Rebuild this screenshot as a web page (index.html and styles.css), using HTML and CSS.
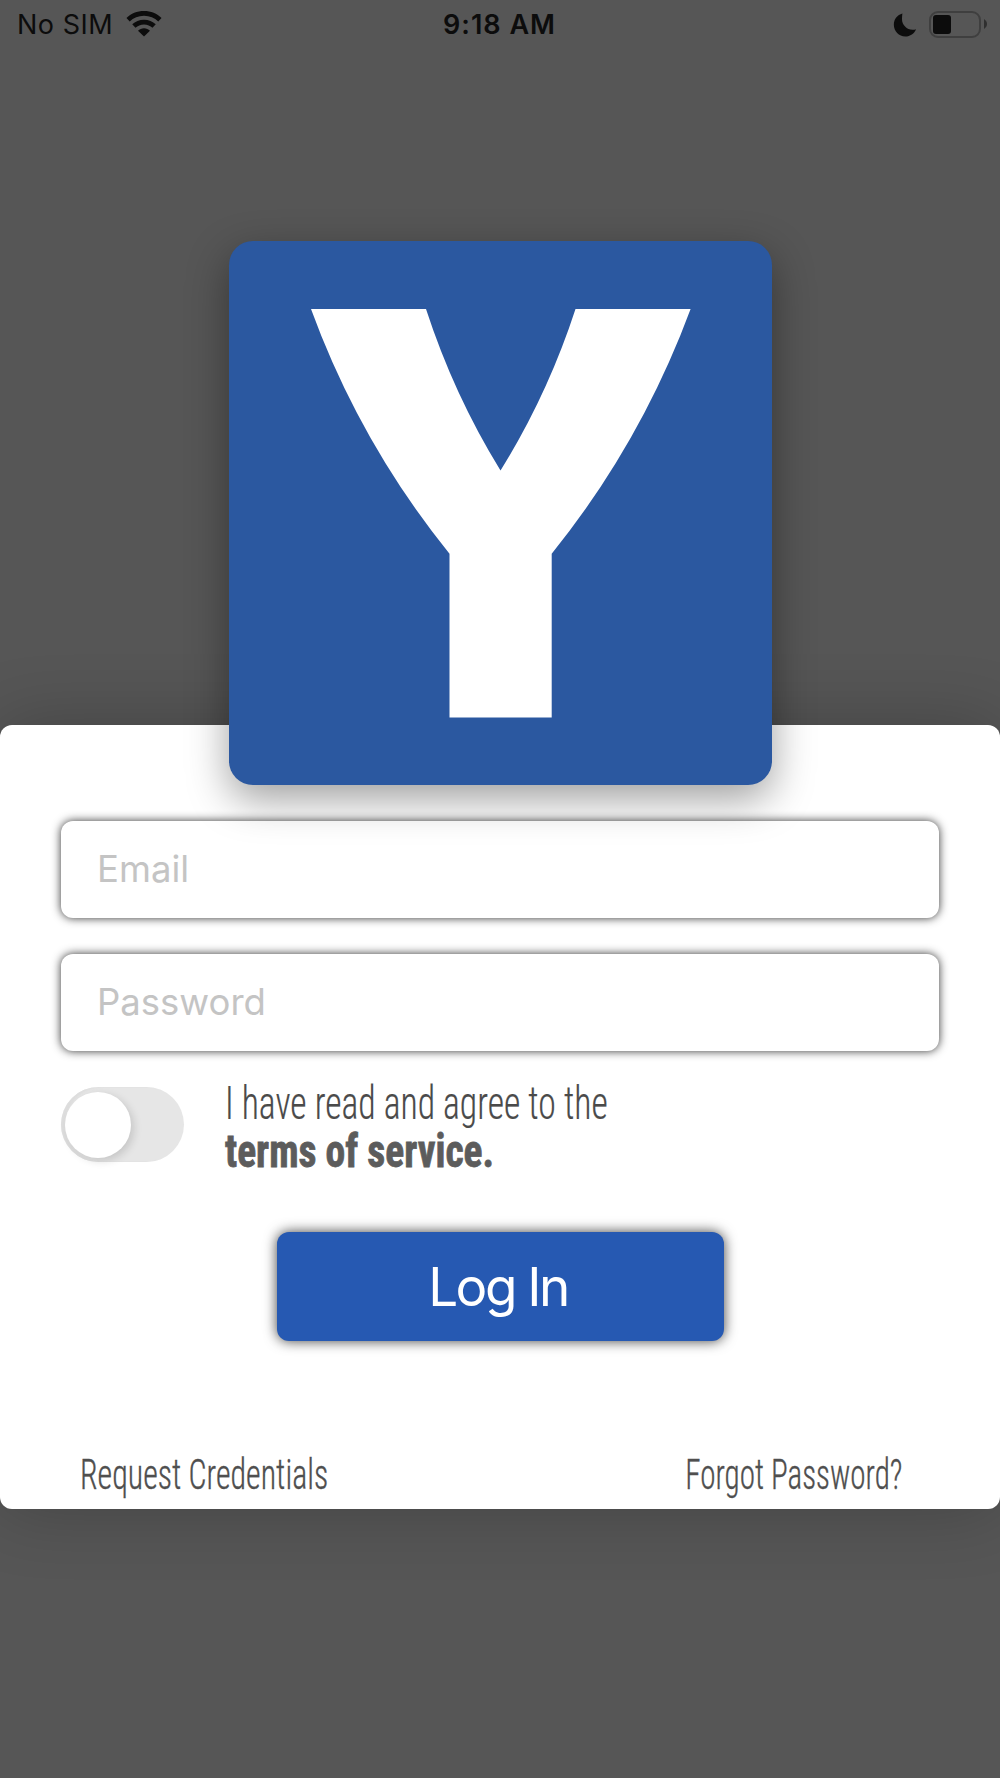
FILE: index.html
```html
<!DOCTYPE html>
<html lang="en">
<head>
<meta charset="utf-8">
<title>Log In</title>
<link rel="stylesheet" href="styles.css">
</head>
<body>
<div class="screen">
  <header class="status">
    <div class="status-left">
      <span class="carrier">No SIM</span>
      <svg class="wifi" viewBox="0 0 38 28" aria-hidden="true">
        <path d="M19 1C11.800 1 5.400 3.700 .8 8.200l3.400 3.700C8 8.200 13.200 6 19 6s11 2.200 14.800 5.900l3.400-3.700C32.600 3.700 26.200 1 19 1z"/>
        <path d="M19 10c-4.800 0-9.100 1.800-12.200 4.800l3.400 3.700C12.400 16.300 15.500 15 19 15s6.600 1.300 8.800 3.500l3.400-3.700C28.100 11.800 23.800 10 19 10z"/>
        <path d="M19 19c-2.400 0-4.600.9-6.200 2.500L19 27.500l6.200-6C23.600 19.900 21.400 19 19 19z"/>
      </svg>
    </div>
    <span class="clock">9:18 AM</span>
    <div class="status-right">
      <svg class="moon" viewBox="0 0 22 23" aria-hidden="true"><path d="M8.500 .5C3.700 1.800.3 6 .3 11.200c0 6.200 4.900 11.300 11 11.300 4.700 0 8.700-2.900 10.300-7-1 .4-2.100.6-3.300.6-5.600 0-10.200-4.600-10.200-10.300 0-1.900.2-3.700.4-5.300z"/></svg>
      <div class="battery"><div class="battery-level"></div></div>
      <svg class="battery-nub" viewBox="0 0 3 10" aria-hidden="true"><path d="M0 0C2 1.500 3 3 3 5S2 8.500 0 10z"/></svg>
    </div>
  </header>

  <div class="logo">
    <svg class="logo-mark" viewBox="0 0 380 409" aria-hidden="true">
      <path d="M0 0H115Q143 86 189.500 161.500Q236.500 86 264.500 0H379.600Q330 134 240.700 244.700V408.500H138.500V244.700Q49 134 0 0Z"/>
    </svg>
  </div>

  <main class="sheet">
    <div class="field">Email</div>
    <div class="field">Password</div>
    <div class="agree">
      <div class="toggle"><div class="knob"></div></div>
      <p class="agree-text">
        <span class="agree-line">I have read and agree to the</span>
        <strong class="agree-bold">terms of service.</strong>
      </p>
    </div>
    <button class="login" type="button">Log In</button>
    <footer class="links">
      <a class="link link-start">Request Credentials</a>
      <a class="link link-end">Forgot Password?</a>
    </footer>
  </main>
</div>
</body>
</html>
```
FILE: styles.css
```css
* { box-sizing: border-box; }
html, body { margin: 0; height: 100%; }
body { background: #565656; font-family: Inter, "Noto Sans", sans-serif; overflow: hidden; }

.screen { width: 1000px; height: 1778px; display: flex; flex-direction: column; align-items: center; }

.status { width: 100%; height: 54px; padding: 8px 13px 0 17px; display: flex; align-items: flex-start; justify-content: space-between; color: #0c0c0c; font-family: Inter, sans-serif; font-size: 27px; line-height: 34px; }
.status-left { display: flex; align-items: flex-start; gap: 12px; width: 295px; }
.carrier { letter-spacing: .5px; }
.wifi { width: 38px; height: 27px; margin-top: 2px; fill: #0c0c0c; }
.clock { font-weight: 600; letter-spacing: 1px; }
.status-right { width: 300px; display: flex; justify-content: flex-end; align-items: flex-start; margin-top: 3px; }
.moon { width: 24px; height: 24px; margin: 2px 12px 0 0; fill: #0c0c0c; }
.battery { width: 52px; height: 27px; border: 2.500px solid #3f3f3f; border-radius: 9px; padding: 2px; }
.battery-level { width: 18px; height: 100%; background: #0c0c0c; border-radius: 3px; }
.battery-nub { width: 3px; height: 10px; margin: 8px 0 0 3px; fill: #2f2f2f; }

.logo { width: 543px; height: 544px; margin-top: 187px; margin-bottom: -60px; padding: 68px 0 0 82.500px; background: #2b58a0; border-radius: 24px; box-shadow: 0 14px 42px rgba(0,0,0,.38); position: relative; z-index: 1; flex: none; }
.logo-mark { display: block; width: 380px; height: 409px; fill: #fff; }

.sheet { width: 100%; height: 784px; flex: none; padding: 96px 61px 0; background: #fff; border-radius: 12px; box-shadow: 0 0 70px rgba(0,0,0,.22); display: flex; flex-direction: column; }

.field { height: 97px; margin-bottom: 36px; padding: 0 36px 2px; display: flex; align-items: center; background: #fff; border-radius: 12px; color: #c4c4c4; font-size: 36.500px; box-shadow: 0 0 10px rgba(0,0,0,.8); flex: none; }

.agree { display: flex; align-items: flex-start; height: 88px; flex: none; }
.toggle { width: 123px; height: 75px; padding: 5px 0 0 4px; background: #e6e6e6; border-radius: 38px; box-shadow: inset 4px 0 2px #dedede; flex: none; }
.knob { width: 66px; height: 66px; background: #fff; border-radius: 50%; box-shadow: 3px 3px 9px rgba(0,0,0,.14); }
.agree-text { margin: -8px 0 0 41px; font-family: "Roboto Condensed", "Liberation Sans Narrow", sans-serif; font-size: 46px; line-height: 48px; }
.agree-line, .agree-bold { display: block; width: max-content; transform-origin: left center; }
.agree-line { color: #4a4a4a; font-weight: 300; transform: scaleX(.775); -webkit-text-stroke: .2px #4a4a4a; }
.agree-bold { color: #5c5c5c; font-weight: 700; transform: scaleX(.86); -webkit-text-stroke: .8px #5c5c5c; }

.login { width: 447px; height: 109px; margin: 57px auto 0; padding: 0 4px 0 0; border: 0; border-radius: 12px; background: #2659b2; color: #fff; font-family: Inter, sans-serif; font-size: 53px; letter-spacing: -2.500px; box-shadow: 0 0 13px rgba(0,0,0,.75); flex: none; }

.links { display: flex; justify-content: space-between; margin-top: 110px; padding: 0 37px 0 19px; }
.link { color: #4f4f4f; font-family: "Roboto Condensed", "Liberation Sans Narrow", sans-serif; font-size: 42px; font-weight: 300; line-height: 48px; display: block; width: max-content; -webkit-text-stroke: .35px #4f4f4f; }
.link-start { transform: scaleX(.76); transform-origin: left center; }
.link-end { transform: scaleX(.74); transform-origin: right center; }
```
